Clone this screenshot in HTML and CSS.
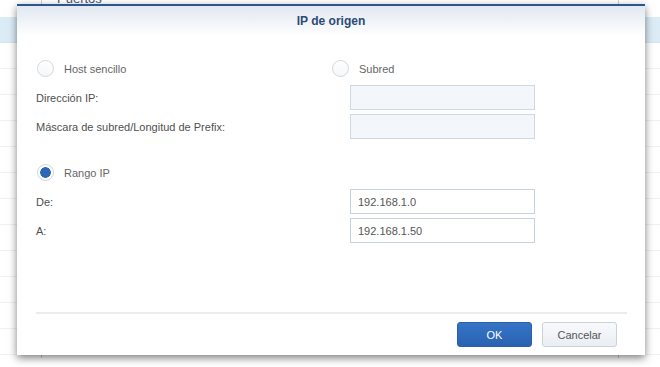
FILE: index.html
```html
<!DOCTYPE html>
<html lang="es">

<head>
    <meta charset="UTF-8">
    <meta name="viewport" content="width=device-width, initial-scale=1.0">
    <title>IP de origen</title>

    <link rel="stylesheet" href="styles.css">
</head>

<body>
    <!-- ventana de fondo -->
    <div class="fondo">
        <div class="fondo-titulo">Puertos</div>
        <div class="fila sel"></div>
        <div class="fila"></div>
        <div class="fila"></div>
        <div class="fila"></div>
        <div class="fila"></div>
        <div class="fila"></div>
        <div class="fila"></div>
        <div class="fila"></div>
        <div class="fila"></div>
        <div class="fila"></div>
        <div class="fila"></div>
        <div class="fila"></div>
        <div class="fila"></div>
    </div>

    <!-- dialogo -->
    <div class="dialogo">
        <div class="cabecera">IP de origen</div>

        <div class="cuerpo">
            <div class="fila-radio">
                <label class="radio ancho"><span class="circulo"></span>Host sencillo</label>
                <label class="radio"><span class="circulo"></span>Subred</label>
            </div>

            <div class="campo">
                <span class="etiqueta">Dirección IP:</span>
                <input type="text" class="entrada apagada" disabled>
            </div>
            <div class="campo junto">
                <span class="etiqueta">Máscara de subred/Longitud de Prefix:</span>
                <input type="text" class="entrada apagada" disabled>
            </div>

            <div class="fila-radio separada">
                <label class="radio ancho"><span class="circulo activo"></span>Rango IP</label>
            </div>

            <div class="campo">
                <span class="etiqueta">De:</span>
                <input type="text" class="entrada" value="192.168.1.0">
            </div>
            <div class="campo junto">
                <span class="etiqueta">A:</span>
                <input type="text" class="entrada" value="192.168.1.50">
            </div>
        </div>

        <div class="pie">
            <button class="boton azul">OK</button>
            <button class="boton">Cancelar</button>
        </div>
    </div>
</body>

</html>
```

FILE: styles.css
```css
body {
    margin: 0;
    padding: 0;
    width: 660px;
    height: 367px;
    overflow: hidden;
    position: relative;
    background-color: #fff;
    font-family: "Liberation Sans", Arial, sans-serif;
    font-size: 11px;
}

.fondo {
    height: 367px;
    margin-top: -9px;
    background-image:
        linear-gradient(#c9ced4, #c9ced4),
        linear-gradient(#c9ced4, #c9ced4);
    background-size: 1px 100%, 1px 100%;
    background-position: 41px 0, 618px 0;
    background-repeat: no-repeat;
}

.fondo-titulo {
    height: 16px;
    line-height: 16px;
    padding-left: 57px;
    font-size: 13px;
    color: #3d5677;
}

.fila {
    height: 25px;
    border-bottom: 1px solid #eef1f4;
}

.fila.sel {
    margin-top: 10px;
    background-color: #dcecf7;
    border-bottom-color: #d2e4f1;
}

.dialogo {
    position: absolute;
    left: 17px;
    top: 4px;
    width: 628px;
    height: 351px;
    box-sizing: border-box;
    background-color: #fff;
    border-top: 2px solid #2c5690;
    box-shadow: 0 3px 8px rgba(0, 0, 0, 0.5);
    display: flex;
    flex-direction: column;
}

.cabecera {
    height: 30px;
    line-height: 30px;
    text-align: center;
    font-weight: bold;
    font-size: 12px;
    color: #2b4b77;
    background: linear-gradient(#e1e8f1, #fff);
}

.cuerpo {
    padding: 0 19px;
}

.fila-radio {
    display: flex;
    margin-top: 24px;
    height: 17px;
}

.fila-radio.separada {
    margin-top: 25px;
}

.radio {
    display: flex;
    align-items: center;
    color: #666;
}

.radio.ancho {
    width: 295px;
}

.circulo {
    width: 17px;
    height: 17px;
    box-sizing: border-box;
    margin-left: 1px;
    margin-right: 10px;
    border: 1px solid #d3d8de;
    border-radius: 50%;
    background: linear-gradient(#fff, #f4f6f8);
}

.circulo.activo {
    border-color: #cfd5dd;
    background: radial-gradient(circle, #2d68b8 0, #2d68b8 5px, #fff 5.6px);
}

.campo {
    display: flex;
    align-items: center;
    margin-top: 8px;
    height: 25px;
}

.campo.junto {
    margin-top: 4px;
}

.etiqueta {
    width: 314px;
    color: #4f4f4f;
}

.entrada {
    width: 185px;
    height: 25px;
    box-sizing: border-box;
    margin: 0;
    padding: 0 7px;
    border: 1px solid #c8d2de;
    border-radius: 0;
    font-family: "Liberation Sans", Arial, sans-serif;
    font-size: 11px;
    color: #555;
    background-color: #fff;
}

.entrada.apagada {
    background-color: #f3f6fa;
    border-color: #cfd8e3;
}

.pie {
    margin: auto 18px 0 19px;
    border-top: 2px solid #ececec;
    padding: 8px 10px 8px 0;
    display: flex;
    justify-content: flex-end;
    gap: 10px;
}

.boton {
    width: 75px;
    height: 25px;
    border: 1px solid #c9d3de;
    border-radius: 3px;
    background: linear-gradient(#f8fafc, #e9eef4);
    font-family: "Liberation Sans", Arial, sans-serif;
    font-size: 11px;
    color: #555;
}

.boton.azul {
    border-color: #2b5fa6;
    background: linear-gradient(#3674c6, #2a62b1);
    color: #fff;
}
```
